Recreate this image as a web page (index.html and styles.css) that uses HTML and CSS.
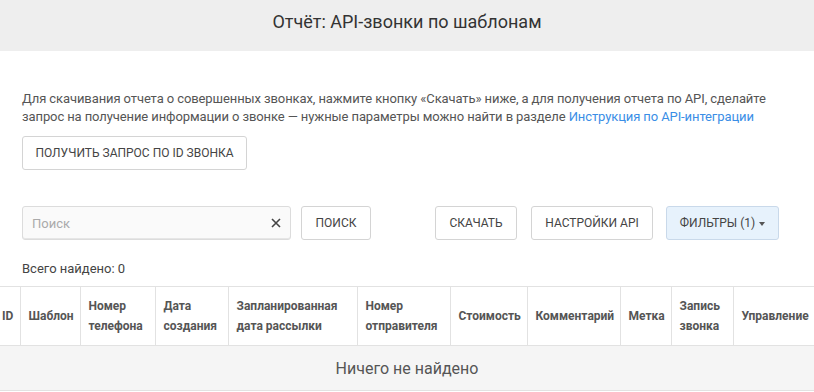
FILE: index.html
```html
<!DOCTYPE html>
<html lang="ru">
<head>
    <meta charset="UTF-8">
    <meta name="viewport" content="width=device-width, initial-scale=1.0">
    <title>Отчёт: API-звонки по шаблонам</title>
    <link rel="stylesheet" href="styles.css">
</head>
<body>

    <div class="page-head">
        <h1>Отчёт: API-звонки по шаблонам</h1>
    </div>

    <div class="content">
        <p class="intro">Для скачивания отчета о совершенных звонках, нажмите кнопку «Скачать» ниже, а для получения отчета по API, сделайте запрос на получение информации о звонке — нужные параметры можно найти в разделе <a href="#">Инструкция по API-интеграции</a></p>

        <button class="btn btn-request">Получить запрос по ID звонка</button>

        <!-- Поиск и действия -->
        <div class="toolbar">
            <div class="search">
                <input type="text" placeholder="Поиск">
                <span class="clear">
                    <svg width="10" height="10" viewBox="0 0 10 10"><path d="M1 1L9 9M9 1L1 9" stroke="#444" stroke-width="1.6"/></svg>
                </span>
            </div>
            <button class="btn btn-search">Поиск</button>
            <div class="actions">
                <button class="btn btn-download">Скачать</button>
                <button class="btn btn-api">Настройки API</button>
                <button class="btn btn-filter">Фильтры (1) <span class="caret"></span></button>
            </div>
        </div>

        <p class="total">Всего найдено: 0</p>
    </div>

    <table class="report">
        <colgroup>
            <col style="width:20px"><col style="width:60px"><col style="width:75px"><col style="width:73px">
            <col style="width:129px"><col style="width:93px"><col style="width:77px"><col style="width:93px">
            <col style="width:51px"><col style="width:62px"><col style="width:81px">
        </colgroup>
        <thead>
            <tr>
                <th class="col-id">ID</th>
                <th>Шаблон</th>
                <th>Номер телефона</th>
                <th>Дата создания</th>
                <th>Запланированная дата рассылки</th>
                <th>Номер отправителя</th>
                <th>Стоимость</th>
                <th>Комментарий</th>
                <th>Метка</th>
                <th>Запись звонка</th>
                <th>Управление</th>
            </tr>
        </thead>
        <tbody>
            <tr>
                <td colspan="11" class="empty">Ничего не найдено</td>
            </tr>
        </tbody>
    </table>

</body>
</html>
```

FILE: styles.css
```css
body { margin: 0; font-family: Roboto, "Liberation Sans", sans-serif; color: #555; background: #fff; overflow: hidden; }

.page-head { background: #eeeeee; height: 51px; text-align: center; }
.page-head h1 { margin: 0; padding-top: 11px; font-size: 18px; font-weight: 400; line-height: 22px; color: #333; }

.content { padding: 0 22px; }
.intro { margin: 39px 0 0; font-size: 13px; line-height: 18px; letter-spacing: -0.1px; color: #555; }
.intro a { color: #3a8ee6; text-decoration: none; }

.btn { font-family: inherit; font-size: 12px; text-transform: uppercase; white-space: nowrap; color: #444; background: #fff; border: 1px solid #d4d4d4; border-radius: 3px; height: 34px; padding: 0; cursor: pointer; }
.btn-request { margin-top: 10px; width: 225px; }

.toolbar { display: flex; align-items: center; margin-top: 36px; }
.search { position: relative; width: 269px; }
.search input { box-sizing: border-box; width: 100%; height: 34px; padding: 0 30px 0 9px; font-family: inherit; font-size: 13px; background: #fafafa; border: 1px solid #dcdcdc; border-radius: 3px; box-shadow: inset 0 -1px 0 #e6e6e6; outline: none; }
.search input::placeholder { color: #aaa; }
.search .clear { position: absolute; right: 10px; top: 12px; line-height: 0; }
.btn-search { margin-left: 10px; width: 70px; }
.actions { display: flex; margin-left: 64px; }
.btn-download { width: 82px; }
.btn-api { width: 122px; margin-left: 14px; }
.btn-filter { width: 113px; margin-left: 13px; background: #e7f2fc; border-color: #c9d9ea; }
.caret { display: inline-block; width: 0; height: 0; margin-left: 1px; vertical-align: middle; border-top: 4px solid #555; border-left: 3.5px solid transparent; border-right: 3.5px solid transparent; }

.total { margin: 20px 0 0; font-size: 13px; line-height: 18px; color: #444; }

.report { margin-top: 8px; width: 814px; table-layout: fixed; border-collapse: collapse; }
.report th { height: 58px; padding: 0 8px; text-align: left; font-size: 12px; font-weight: 700; line-height: 20px; color: #555; border: 1px solid #e2e2e2; border-left: none; }
.report th:last-child { border-right: none; }
.report th.col-id { padding: 0 2px; }
.report td.empty { height: 44px; background: #f5f5f5; text-align: center; font-size: 16px; color: #555; border-bottom: 1px solid #e2e2e2; padding: 0; }
```
